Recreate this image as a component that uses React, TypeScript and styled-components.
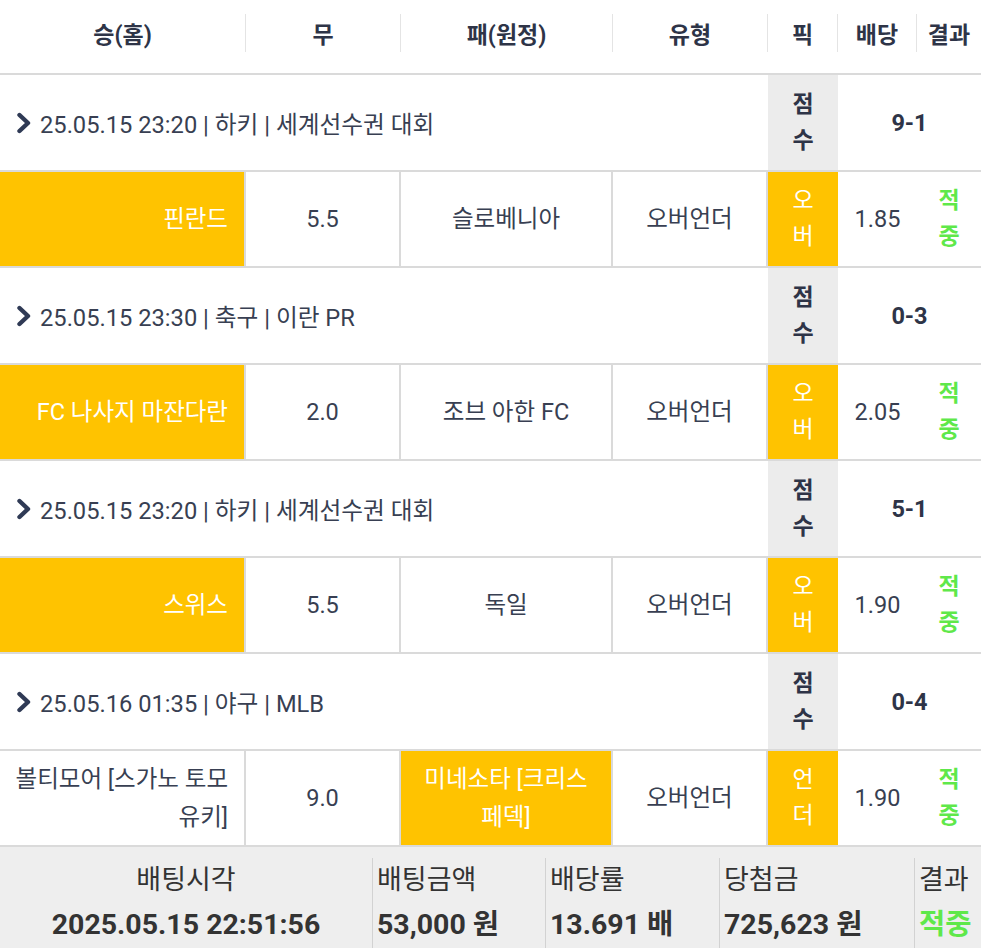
import React from "react";
import styled, { createGlobalStyle } from "styled-components";

const Global = createGlobalStyle`
  html, body { margin: 0; padding: 0; background: #ffffff; }
  body { font-family: Roboto, "Noto Sans CJK KR", sans-serif; }
  * { box-sizing: border-box; }
`;

const COLS = "246px 155px 212px 155px 70px 79px 64px";
const YELLOW = "#ffc300";
const LINE = "#dadada";
const INK = "#383f52";
const GREEN = "#5fe84a";

const Page = styled.div`
  width: 981px;
  height: 948px;
  overflow: hidden;
  color: ${INK};
`;

const HeaderRow = styled.div`
  display: grid;
  grid-template-columns: ${COLS};
  height: 75px;
  padding-top: 14px;
  border-bottom: 2px solid ${LINE};
  align-items: start;
`;

const HeaderCell = styled.div<{ $last?: boolean }>`
  height: 38px;
  display: flex;
  align-items: center;
  justify-content: center;
  font-size: 23px;
  font-weight: 700;
  color: #2e3447;
  border-right: ${(p) => (p.$last ? "none" : "1px solid #e4e4e4")};
`;

const GameRow = styled.div`
  display: grid;
  grid-template-columns: ${COLS};
  height: 95px;
`;

const GameInfo = styled.div`
  grid-column: 1 / 5;
  display: flex;
  align-items: center;
  gap: 8px;
  padding-left: 16px;
  font-size: 23.7px;
  color: ${INK};
`;

const Chevron = styled.svg`
  width: 16px;
  height: 22px;
  flex: none;
`;

const Stack = styled.div<{ $bg: string; $fg: string; $bold?: boolean }>`
  display: flex;
  flex-direction: column;
  align-items: center;
  justify-content: center;
  background: ${(p) => p.$bg};
  color: ${(p) => p.$fg};
  font-size: 23px;
  font-weight: ${(p) => (p.$bold ? 700 : 400)};
  line-height: 36px;
`;

const Score = styled.div`
  grid-column: 6 / 8;
  display: flex;
  align-items: center;
  justify-content: center;
  font-size: 23.5px;
  font-weight: 700;
  color: #2e3447;
`;

const BetRow = styled.div`
  display: grid;
  grid-template-columns: ${COLS};
  height: 98px;
  border-top: 2px solid ${LINE};
  border-bottom: 2px solid ${LINE};
`;

const BetCell = styled.div<{ $pick?: boolean; $align?: "right" | "center" }>`
  display: flex;
  align-items: center;
  justify-content: ${(p) => (p.$align === "right" ? "flex-end" : "center")};
  text-align: ${(p) => p.$align ?? "center"};
  padding: ${(p) => (p.$align === "right" ? "0 16px 0 12px" : "0 10px")};
  background: ${(p) => (p.$pick ? YELLOW : "#ffffff")};
  color: ${(p) => (p.$pick ? "#ffffff" : INK)};
  border-right: 2px solid ${LINE};
  font-size: 23.5px;
  line-height: 38px;
  word-break: keep-all;
`;

const Odds = styled.div`
  display: flex;
  align-items: center;
  justify-content: center;
  font-size: 23.5px;
  color: ${INK};
`;

const Summary = styled.div`
  display: grid;
  grid-template-columns: 372px 173px 174px 195px 67px;
  height: 101px;
  padding-top: 11px;
  background: #eeeeee;
  color: #333333;
`;

const SumCell = styled.div<{ $center?: boolean; $first?: boolean }>`
  display: flex;
  flex-direction: column;
  align-items: ${(p) => (p.$center ? "center" : "flex-start")};
  padding-left: ${(p) => (p.$center ? "0" : "4px")};
  border-left: ${(p) => (p.$first ? "none" : "1px solid #d2d2d2")};
  white-space: nowrap;
`;

const SumLabel = styled.div`
  font-size: 27px;
  line-height: 44px;
`;

const SumValue = styled.div<{ $green?: boolean }>`
  font-size: 28.5px;
  font-weight: 700;
  line-height: 46px;
  color: ${(p) => (p.$green ? GREEN : "#333333")};
`;

type Bet = {
  info: string;
  score: string;
  home: string;
  draw: string;
  away: string;
  pickSide: "home" | "away";
  pick: [string, string];
  odds: string;
};

const bets: Bet[] = [
  {
    info: "25.05.15 23:20 | 하키 | 세계선수권 대회",
    score: "9-1",
    home: "핀란드",
    draw: "5.5",
    away: "슬로베니아",
    pickSide: "home",
    pick: ["오", "버"],
    odds: "1.85",
  },
  {
    info: "25.05.15 23:30 | 축구 | 이란 PR",
    score: "0-3",
    home: "FC 나사지 마잔다란",
    draw: "2.0",
    away: "조브 아한 FC",
    pickSide: "home",
    pick: ["오", "버"],
    odds: "2.05",
  },
  {
    info: "25.05.15 23:20 | 하키 | 세계선수권 대회",
    score: "5-1",
    home: "스위스",
    draw: "5.5",
    away: "독일",
    pickSide: "home",
    pick: ["오", "버"],
    odds: "1.90",
  },
  {
    info: "25.05.16 01:35 | 야구 | MLB",
    score: "0-4",
    home: "볼티모어 [스가노 토모 유키]",
    draw: "9.0",
    away: "미네소타 [크리스 페덱]",
    pickSide: "away",
    pick: ["언", "더"],
    odds: "1.90",
  },
];

const headers = ["승(홈)", "무", "패(원정)", "유형", "픽", "배당", "결과"];

export default function App() {
  return (
    <Page>
      <Global />
      <HeaderRow>
        {headers.map((h, i) => (
          <HeaderCell key={h} $last={i === headers.length - 1}>
            {h}
          </HeaderCell>
        ))}
      </HeaderRow>
      {bets.map((b, i) => (
        <React.Fragment key={i}>
          <GameRow>
            <GameInfo>
              <Chevron viewBox="0 0 16 22">
                <polyline
                  points="3.5,3 12,11 3.5,19"
                  fill="none"
                  stroke="#2f3a55"
                  strokeWidth="4.4"
                  strokeLinecap="round"
                  strokeLinejoin="round"
                />
              </Chevron>
              {b.info}
            </GameInfo>
            <Stack $bg="#ececec" $fg="#2e3447" $bold>
              <span>점</span>
              <span>수</span>
            </Stack>
            <Score>{b.score}</Score>
          </GameRow>
          <BetRow>
            <BetCell $align="right" $pick={b.pickSide === "home"}>
              {b.home}
            </BetCell>
            <BetCell>{b.draw}</BetCell>
            <BetCell $pick={b.pickSide === "away"}>{b.away}</BetCell>
            <BetCell>오버언더</BetCell>
            <Stack $bg={YELLOW} $fg="#ffffff">
              <span>{b.pick[0]}</span>
              <span>{b.pick[1]}</span>
            </Stack>
            <Odds>{b.odds}</Odds>
            <Stack $bg="#ffffff" $fg={GREEN} $bold>
              <span>적</span>
              <span>중</span>
            </Stack>
          </BetRow>
        </React.Fragment>
      ))}
      <Summary>
        <SumCell $center $first>
          <SumLabel>배팅시각</SumLabel>
          <SumValue>2025.05.15 22:51:56</SumValue>
        </SumCell>
        <SumCell>
          <SumLabel>배팅금액</SumLabel>
          <SumValue>53,000 원</SumValue>
        </SumCell>
        <SumCell>
          <SumLabel>배당률</SumLabel>
          <SumValue>13.691 배</SumValue>
        </SumCell>
        <SumCell>
          <SumLabel>당첨금</SumLabel>
          <SumValue>725,623 원</SumValue>
        </SumCell>
        <SumCell>
          <SumLabel>결과</SumLabel>
          <SumValue $green>적중</SumValue>
        </SumCell>
      </Summary>
    </Page>
  );
}
